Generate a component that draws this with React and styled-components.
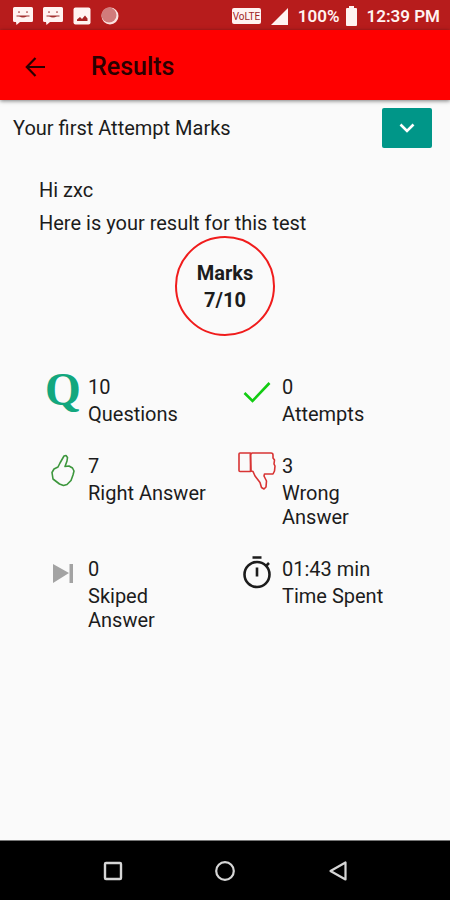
import React from "react";
import styled, { createGlobalStyle } from "styled-components";

const GlobalStyle = createGlobalStyle`
  * {
    box-sizing: border-box;
  }
  body {
    margin: 0;
    background: #fafafa;
    font-family: Roboto, sans-serif;
    font-size: 20px;
    line-height: 24px;
    color: #1c1c1c;
  }
  svg {
    display: block;
    flex: none;
    overflow: visible;
  }
`;

const Screen = styled.div`
  display: flex;
  flex-direction: column;
  min-height: 100vh;
`;

const StatusBar = styled.div`
  display: flex;
  justify-content: space-between;
  align-items: center;
  height: 30px;
  padding: 2px 10px 0 13px;
  background: #b71c1c;
  color: #fff3f1;
  font-size: 17px;
  font-weight: 600;
`;

const StatusGroup = styled.div`
  display: flex;
  align-items: center;
  gap: ${(props) => props.$gap};
`;

const AppBar = styled.header`
  display: flex;
  align-items: center;
  gap: 40px;
  height: 70px;
  padding: 4px 20px 0;
  background: #ff0000;
  box-shadow: 0 1px 4px rgba(0, 0, 0, 0.5);
`;

const BackButton = styled.button`
  padding: 0;
  border: none;
  background: none;
  color: #2b0000;
  cursor: pointer;
`;

const Title = styled.h1`
  margin: 0;
  font-size: 25px;
  line-height: 32px;
  font-weight: 500;
  color: #2b0000;
`;

const Main = styled.main`
  flex: 1;
`;

const AttemptRow = styled.div`
  display: flex;
  justify-content: space-between;
  align-items: center;
  padding: 8px 18px 0 13px;
`;

const ExpandButton = styled.button`
  display: flex;
  justify-content: center;
  align-items: center;
  width: 50px;
  height: 40px;
  padding: 0;
  border: none;
  border-radius: 2px;
  background: #009688;
  color: #fff;
  cursor: pointer;
`;

const Greeting = styled.div`
  display: grid;
  gap: 9px;
  padding: 30px 39px 0;

  p {
    margin: 0;
  }
`;

const MarksCircle = styled.div`
  display: flex;
  flex-direction: column;
  justify-content: center;
  gap: 3px;
  width: 100px;
  height: 100px;
  margin: 1px auto 0;
  border: 2px solid #f01c1c;
  border-radius: 50%;
  text-align: center;
  font-weight: 700;
`;

const Stats = styled.div`
  display: grid;
  grid-template-columns: 1fr 1fr;
  row-gap: 28px;
  padding: 39px 24px 39px 38px;
`;

const Stat = styled.div`
  display: flex;
  padding-right: 24px;
`;

const StatIcon = styled.div`
  display: flex;
  justify-content: center;
  align-items: flex-start;
  flex: none;
  width: 50px;
`;

const StatText = styled.div`
  display: grid;
  align-content: start;
  gap: 3px;
`;

const QMark = styled.span`
  font-family: "Liberation Serif", serif;
  font-size: 46px;
  line-height: 30px;
  font-weight: 700;
  color: #12a77e;
`;

const NavBar = styled.nav`
  display: grid;
  grid-template-columns: repeat(3, 1fr);
  height: 60px;
  padding: 0 12.5%;
  border-top: 1px solid #777;
  background: #000;
`;

const NavButton = styled.button`
  display: flex;
  justify-content: center;
  align-items: center;
  padding: 0;
  border: none;
  background: none;
  color: #d6d6d6;
  cursor: pointer;
`;

const MessageIcon = () => (
  <svg width="20" height="18" viewBox="0 0 20 18">
    <path
      d="M1.500 0h17A1.500 1.500 0 0 1 20 1.500v12A1.500 1.500 0 0 1 18.500 15H7l-3.500 3L3 15H1.500A1.500 1.500 0 0 1 0 13.500v-12A1.500 1.500 0 0 1 1.500 0z"
      fill="#fff3f1"
    />
    <path d="M5 5.500q1-1.800 2 0M13 5.500q1-1.800 2 0M3.500 9h13" fill="none" stroke="#a33030" strokeWidth="1" />
    <path d="M6 9q4 3 8 0z" fill="#a33030" />
  </svg>
);

const ImageIcon = () => (
  <svg width="18" height="18" viewBox="0 0 18 18">
    <rect x="0.500" y="0.500" width="17" height="17" rx="2" fill="#fff3f1" />
    <path d="M4 14v-1.500l3-2.500 2 2 3-3.500 2.500 3V14z" fill="#a82222" />
  </svg>
);

const BallIcon = () => (
  <svg width="18" height="18" viewBox="0 0 18 18">
    <circle cx="9" cy="9" r="8.500" fill="#fbe3e0" />
    <circle cx="8" cy="8" r="7.500" fill="#d17b7b" />
  </svg>
);

const VolteIcon = () => (
  <svg width="29" height="16" viewBox="0 0 29 16">
    <rect width="29" height="16" rx="2" fill="#fff3f1" />
    <text x="14.500" y="11.500" textAnchor="middle" fontFamily="Roboto, sans-serif" fontSize="10" fontWeight="400" fill="#a02626">
      VoLTE
    </text>
  </svg>
);

const SignalIcon = () => (
  <svg width="17" height="17" viewBox="0 0 17 17">
    <path d="M17 0v17H0z" fill="#fff3f1" />
  </svg>
);

const BatteryIcon = () => (
  <svg width="11" height="20" viewBox="0 0 11 20">
    <path d="M3 0h5v2h2q1 0 1 1v16q0 1-1 1H1q-1 0-1-1V3q0-1 1-1h2z" fill="#fff3f1" />
  </svg>
);

const ArrowIcon = () => (
  <svg width="31" height="30" viewBox="0 0 31 30" fill="none" stroke="currentColor" strokeWidth="2.200">
    <path d="M25 15H7M15.500 6L6.800 15l8.700 9" />
  </svg>
);

const ChevronIcon = () => (
  <svg width="16" height="10" viewBox="0 0 16 10" fill="none" stroke="currentColor" strokeWidth="2.600">
    <path d="M1.500 1.500L8 8l6.500-6.500" />
  </svg>
);

const CheckIcon = () => (
  <svg width="28" height="38" viewBox="0 0 28 38" fill="none" stroke="#12cc12" strokeWidth="2.600">
    <path d="M1.500 18l8 8L26.500 8" />
  </svg>
);

const ThumbUpIcon = () => (
  <svg width="24" height="34" viewBox="0 0 24 34" fill="none" stroke="#3c963c" strokeWidth="1.600" strokeLinejoin="round">
    <path d="M13 2l2-.5 1.500 2-.5 3.500-2 5.500 4-.5 3.500 2 1.500 3-1 4-2 5.500-4 4-3.500 1-4-1.500L2 25l-1-6.500L3 15l4-2 2-4z" />
  </svg>
);

const ThumbDownIcon = () => (
  <svg width="38" height="38" viewBox="0 0 38 38" fill="none" stroke="#d83434" strokeWidth="1.600" strokeLinejoin="round">
    <path d="M2 -1h10.500v18.500H2q-1 0-1-1V0q0-1 1-1z" />
    <path d="M12.500 .5L14 -1h19q2 0 2 2v3l1.500 2-.5 4 1 2-.5 5-1.500 3h-8.500l-.5 2 2.500 5-.5 6-2 2-2.500-1.500-1.500-5-5-6.500-2-4.500-2-.5z" />
  </svg>
);

const SkipIcon = () => (
  <svg width="20" height="34" viewBox="0 0 20 34" fill="#a3a3a3">
    <path d="M0 7l16 9L0 26zM16.500 7H20v19h-3.500z" />
  </svg>
);

const TimerIcon = () => (
  <svg width="28" height="34" viewBox="0 0 28 34" fill="none" stroke="#1c1c1c" strokeWidth="2.600">
    <circle cx="14" cy="17.500" r="12.500" />
    <path d="M9.500 .5h9M14 10.500v9M23 9l3-3" />
  </svg>
);

const stats = [
  { value: "10", label: "Questions", icon: <QMark aria-hidden="true">Q</QMark> },
  { value: "0", label: "Attempts", icon: <CheckIcon /> },
  { value: "7", label: "Right Answer", icon: <ThumbUpIcon /> },
  { value: "3", label: "Wrong Answer", icon: <ThumbDownIcon /> },
  { value: "0", label: "Skiped Answer", icon: <SkipIcon /> },
  { value: "01:43 min", label: "Time Spent", icon: <TimerIcon /> },
];

const App = () => {
  return (
    <Screen>
      <GlobalStyle />
      <StatusBar>
        <StatusGroup $gap="10px">
          <MessageIcon />
          <MessageIcon />
          <ImageIcon />
          <BallIcon />
        </StatusGroup>
        <StatusGroup $gap="10px">
          <VolteIcon />
          <SignalIcon />
          <StatusGroup $gap="6px">
            <span>100%</span>
            <BatteryIcon />
          </StatusGroup>
          <span>12:39 PM</span>
        </StatusGroup>
      </StatusBar>
      <AppBar>
        <BackButton aria-label="Back">
          <ArrowIcon />
        </BackButton>
        <Title>Results</Title>
      </AppBar>
      <Main>
        <AttemptRow>
          <span>Your first Attempt Marks</span>
          <ExpandButton aria-label="Show attempts">
            <ChevronIcon />
          </ExpandButton>
        </AttemptRow>
        <Greeting>
          <p>Hi zxc</p>
          <p>Here is your result for this test</p>
        </Greeting>
        <MarksCircle>
          <span>Marks</span>
          <span>7/10</span>
        </MarksCircle>
        <Stats>
          {stats.map((stat) => (
            <Stat key={stat.label}>
              <StatIcon>{stat.icon}</StatIcon>
              <StatText>
                <span>{stat.value}</span>
                <span>{stat.label}</span>
              </StatText>
            </Stat>
          ))}
        </Stats>
      </Main>
      <NavBar>
        <NavButton aria-label="Recent apps">
          <svg width="20" height="20" viewBox="0 0 20 20" fill="none" stroke="currentColor" strokeWidth="2.400">
            <rect x="2" y="2" width="16" height="16" rx="1" />
          </svg>
        </NavButton>
        <NavButton aria-label="Home">
          <svg width="20" height="20" viewBox="0 0 20 20" fill="none" stroke="currentColor" strokeWidth="2.200">
            <circle cx="10" cy="10" r="8.800" />
          </svg>
        </NavButton>
        <NavButton aria-label="Go back">
          <svg width="20" height="20" viewBox="0 0 20 20" fill="none" stroke="currentColor" strokeWidth="2.200" strokeLinejoin="round">
            <path d="M17.500 1.500v17L2.500 10z" />
          </svg>
        </NavButton>
      </NavBar>
    </Screen>
  );
};

export default App;
